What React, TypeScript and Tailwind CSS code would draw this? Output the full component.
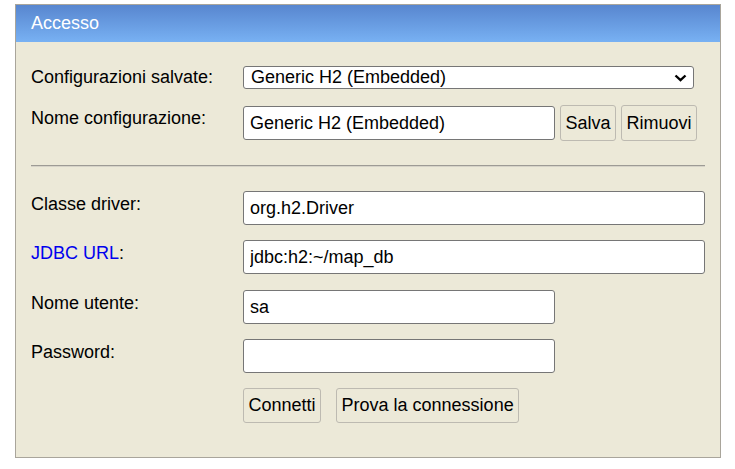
import { useState } from 'react';

const font = { fontFamily: '"Liberation Sans", Arial, sans-serif' };

function Row({
  label,
  children,
  className = '',
  labelPad = 'pt-[3px]',
}: {
  label: React.ReactNode;
  children: React.ReactNode;
  className?: string;
  labelPad?: string;
}) {
  return (
    <div className={`flex items-start ${className}`}>
      <div className={`w-[212px] shrink-0 leading-[21px] text-black ${labelPad}`}>{label}</div>
      <div className="flex items-center">{children}</div>
    </div>
  );
}

const inputCls =
  'block h-[34px] rounded-[3px] border border-[#767676] bg-white pl-[6px] text-[18px] text-black outline-none';
const btnCls =
  'rounded-[3px] border border-[#bdbab1] bg-[#ece9d8] px-[4.5px] text-[18px] leading-[21px] text-black';

export default function App() {
  const [config, setConfig] = useState('Generic H2 (Embedded)');
  const [name, setName] = useState('Generic H2 (Embedded)');
  const [driver, setDriver] = useState('org.h2.Driver');
  const [url, setUrl] = useState('jdbc:h2:~/map_db');
  const [user, setUser] = useState('sa');
  const [pwd, setPwd] = useState('');

  return (
    <div className="min-h-[469px] bg-white pt-[4px] pl-[15px] text-[18px]" style={font}>
      <div className="w-[706px] border border-[#a9a59b] bg-[#ece9d8]">
        <div className="flex h-[37px] items-center bg-linear-to-b from-[#5886cf] to-[#78b1f3] pl-[15px] text-[18px] text-white">
          Accesso
        </div>

        <div className="pl-[15px] pb-[34px]">
          <Row label="Configurazioni salvate:" className="mt-[24px]" labelPad="pt-[1px]">
            <div className="relative">
              <select
                value={config}
                onChange={(e) => setConfig(e.target.value)}
                className="block h-[23px] w-[451px] appearance-none rounded-[3px] border border-[#767676] bg-white pl-[7px] text-[18px] leading-[21px] text-black outline-none"
                style={font}
              >
                <option>Generic H2 (Embedded)</option>
                <option>Generic H2 (Server)</option>
                <option>Generic JNDI Data Source</option>
              </select>
              <svg
                className="pointer-events-none absolute right-[7px] top-[8px]"
                width="13"
                height="8"
                viewBox="0 0 13 8"
              >
                <path d="M1.5 1.5 L6.5 6.2 L11.5 1.5" fill="none" stroke="#000" strokeWidth="2.4" />
              </svg>
            </div>
          </Row>

          <Row label="Nome configurazione:" className="mt-[16px]">
            <input
              value={name}
              onChange={(e) => setName(e.target.value)}
              className={`${inputCls} w-[312px]`}
              style={font}
            />
            <button className={`${btnCls} ml-[5px] h-[36px]`} style={font}>
              Salva
            </button>
            <button className={`${btnCls} ml-[5px] h-[36px]`} style={font}>
              Rimuovi
            </button>
          </Row>

          <div className="mt-[24px] mr-[15px] h-[2px] border-t border-[#9d9b95] bg-[#d6d3c8]" />

          <Row label="Classe driver:" className="mt-[24px]">
            <input
              value={driver}
              onChange={(e) => setDriver(e.target.value)}
              className={`${inputCls} w-[462px]`}
              style={font}
            />
          </Row>

          <Row
            label={
              <>
                <a href="#" className="text-[#0000ee] no-underline">
                  JDBC URL
                </a>
                :
              </>
            }
            className="mt-[15px]"
          >
            <input
              value={url}
              onChange={(e) => setUrl(e.target.value)}
              className={`${inputCls} w-[462px]`}
              style={font}
            />
          </Row>

          <Row label="Nome utente:" className="mt-[16px]">
            <input
              value={user}
              onChange={(e) => setUser(e.target.value)}
              className={`${inputCls} w-[312px]`}
              style={font}
            />
          </Row>

          <Row label="Password:" className="mt-[15px]">
            <input
              type="password"
              value={pwd}
              onChange={(e) => setPwd(e.target.value)}
              className={`${inputCls} w-[312px]`}
              style={font}
            />
          </Row>

          <Row label="" className="mt-[15px]">
            <button className={`${btnCls} h-[35px]`} style={font}>
              Connetti
            </button>
            <button className={`${btnCls} ml-[15px] h-[35px]`} style={font}>
              Prova la connessione
            </button>
          </Row>
        </div>
      </div>
    </div>
  );
}
